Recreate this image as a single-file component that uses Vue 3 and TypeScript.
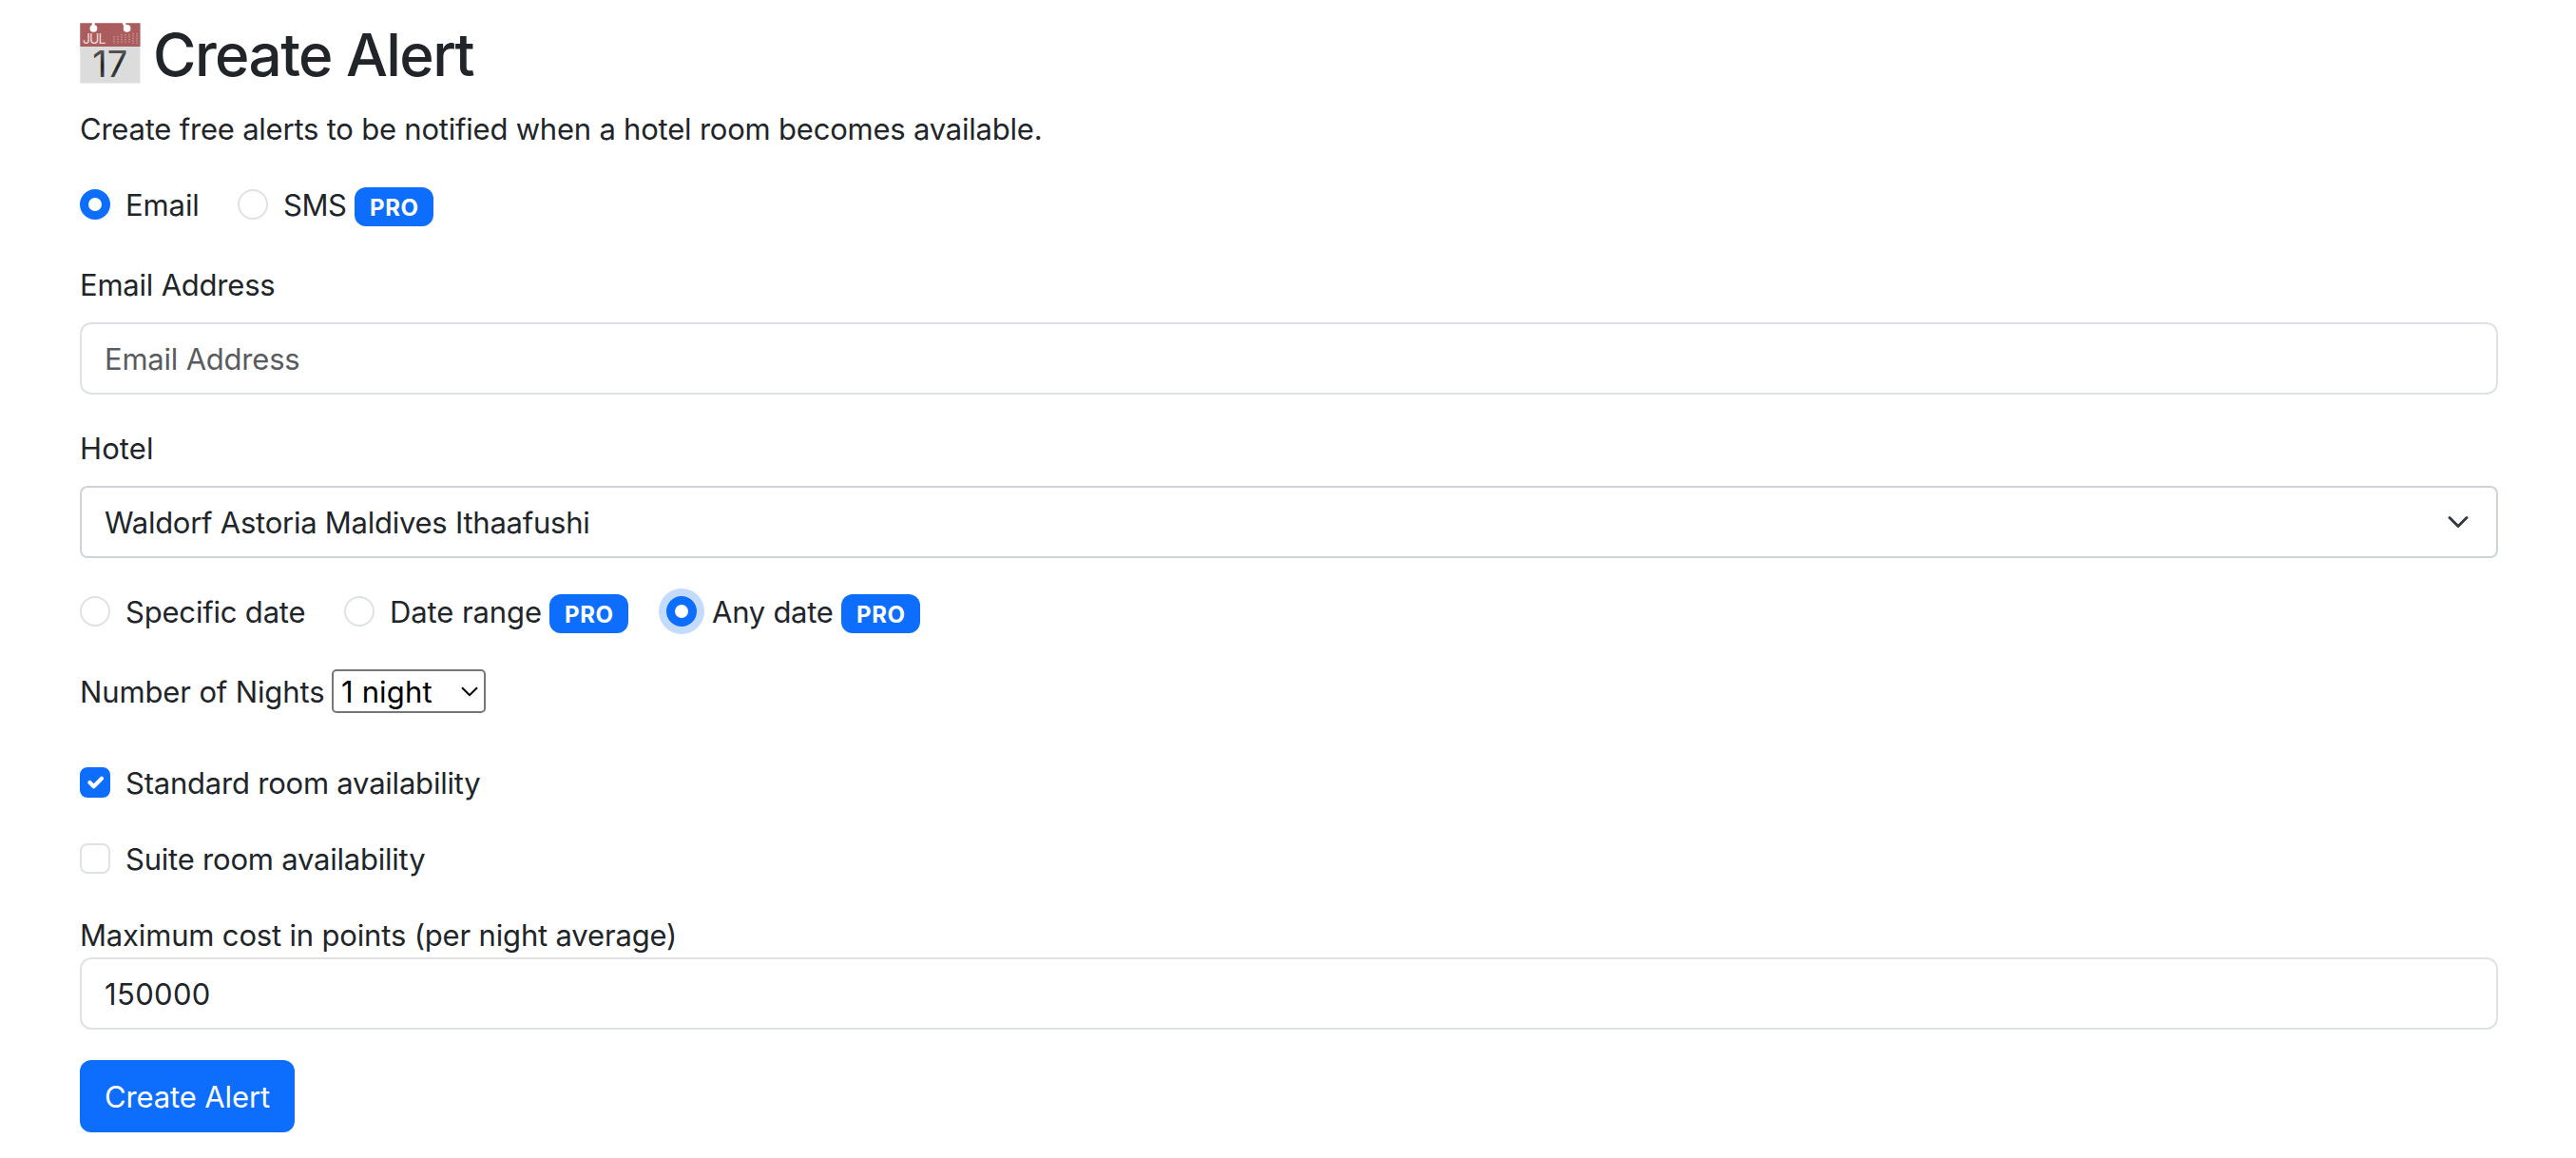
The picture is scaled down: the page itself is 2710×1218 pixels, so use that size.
<script setup lang="ts">
import { ref } from 'vue'

const channel = ref('email')
const email = ref('')
const hotel = ref('Waldorf Astoria Maldives Ithaafushi')
const dateMode = ref('any')
const nights = ref('1 night')
const standardRoom = ref(true)
const suiteRoom = ref(false)
const maxPoints = ref('150000')

// Dot columns of the miniature month grid: x position and first row
const gridColumns = [
  { x: 36, top: 14 },
  { x: 40, top: 14 },
  { x: 44, top: 12 },
  { x: 48, top: 12 },
  { x: 52, top: 12 },
  { x: 56, top: 11 },
  { x: 60, top: 11 },
]
</script>

<template>
  <main class="page">
    <h1 class="title">
      <svg class="calendar" width="64" height="64" viewBox="0 0 64 64" aria-hidden="true">
        <defs>
          <linearGradient id="digits" x1="0" y1="0" x2="0" y2="1">
            <stop offset="0.2" stop-color="#555" />
            <stop offset="0.55" stop-color="#222" />
            <stop offset="0.85" stop-color="#4a4a4a" />
          </linearGradient>
        </defs>
        <rect x="0.3" y="0.3" width="63.2" height="63.2" fill="#dcdcdc" />
        <rect x="0.3" y="0.3" width="63.2" height="24.7" fill="#ab5d5d" />
        <g fill="#fff">
          <circle cx="14.4" cy="5.8" r="3.9" />
          <rect x="12.8" y="0" width="2.8" height="4" />
          <circle cx="49.6" cy="5.8" r="3.9" />
          <path d="M44.6 0h3.4l1.6 4-3 1z" />
        </g>
        <g stroke="#d3a5a5" stroke-width="1.2" stroke-dasharray="1.3 1.2">
          <line v-for="c in gridColumns" :key="c.x" :x1="c.x" :x2="c.x" :y1="c.top" y2="22" />
        </g>
        <text x="3" y="22" font-size="14" fill="#f0dcdc" textLength="24.5">JUL</text>
        <text x="13.2" y="57.3" font-size="38" fill="url(#digits)" textLength="37">17</text>
      </svg>
      <span>Create Alert</span>
    </h1>

    <p class="lead">Create free alerts to be notified when a hotel room becomes available.</p>

    <div class="choices channel">
      <label class="choice email"><input v-model="channel" type="radio" value="email" /><span>Email</span></label>
      <label class="choice sms"><input v-model="channel" type="radio" value="sms" /><span>SMS</span></label>
      <span class="badge">PRO</span>
    </div>

    <label class="label" for="email">Email Address</label>
    <input id="email" v-model="email" class="control" type="text" placeholder="Email Address" />

    <label class="label hotel-label" for="hotel">Hotel</label>
    <div class="select-wrap">
      <select id="hotel" v-model="hotel" class="control select">
        <option>Waldorf Astoria Maldives Ithaafushi</option>
      </select>
      <svg class="chevron" width="24" height="24" viewBox="0 0 16 16" aria-hidden="true">
        <path d="m2 5 6 6 6-6" fill="none" stroke="#343a40" stroke-width="2" stroke-linecap="round" stroke-linejoin="round" />
      </svg>
    </div>

    <div class="choices dates">
      <label class="choice specific"><input v-model="dateMode" type="radio" value="specific" /><span>Specific date</span></label>
      <label class="choice range"><input v-model="dateMode" type="radio" value="range" /><span>Date range</span></label>
      <span class="badge">PRO</span>
      <label class="choice any"><input v-model="dateMode" class="focused" type="radio" value="any" /><span>Any date</span></label>
      <span class="badge">PRO</span>
    </div>

    <div class="nights">
      <label for="nights">Number of Nights</label>
      <div class="nights-wrap">
        <select id="nights" v-model="nights" class="nights-select">
          <option>1 night</option>
        </select>
        <svg class="nights-chevron" width="18" height="11" viewBox="0 0 18 11" aria-hidden="true">
          <path d="M1 1.2 9 9.2 17 1.2" fill="none" stroke="#000" stroke-width="2" />
        </svg>
      </div>
    </div>

    <label class="choice check standard"><input v-model="standardRoom" type="checkbox" /><span>Standard room availability</span></label>
    <label class="choice check suite"><input v-model="suiteRoom" type="checkbox" /><span>Suite room availability</span></label>

    <label class="cost-label" for="cost">Maximum cost in points (per night average)</label>
    <input id="cost" v-model="maxPoints" class="control cost" type="text" />

    <button class="submit" type="button">Create Alert</button>
  </main>
</template>

<style>
body {
  margin: 0;
  background: #fff;
}
</style>

<style scoped>
.page {
  box-sizing: border-box;
  height: 1218px;
  padding: 19px 82px 0 84px;
  display: flex;
  flex-direction: column;
  align-items: flex-start;
  overflow: hidden;
  color: #212529;
  font: 400 31px/48px Inter, 'Liberation Sans', sans-serif;
  letter-spacing: -0.215px;
  white-space: nowrap;
}

input,
select,
button {
  box-sizing: border-box;
  margin: 0;
  font: inherit;
  letter-spacing: inherit;
  color: inherit;
  appearance: none;
  outline: none;
}

.title {
  display: flex;
  gap: 13px;
  height: 77px;
  margin: 0;
  font-size: 62px;
  font-weight: 500;
  line-height: 77px;
  letter-spacing: -1.58px;
}

.calendar {
  margin-top: 5px;
  letter-spacing: 0;
  font-weight: 400;
  overflow: visible;
}

.lead {
  margin: 16px 0 0;
  letter-spacing: -0.215px;
}

.choices {
  display: flex;
  align-items: flex-start;
  height: 48px;
}

.channel {
  margin-top: 32px;
}

.choice {
  display: flex;
  align-items: flex-start;
  gap: 16px;
}

.choice input {
  flex: none;
  width: 32px;
  height: 32px;
  margin-top: 7px;
  border: 2px solid #dee2e6;
  background: #fff no-repeat center / contain;
}

.choice input[type='radio'] {
  border-radius: 50%;
}

.choice input[type='checkbox'] {
  border-radius: 8px;
}

.choice input:checked {
  border-color: #0d6efd;
  background-color: #0d6efd;
}

.choice input[type='radio']:checked {
  background-image: url("data:image/svg+xml,%3csvg xmlns='http://www.w3.org/2000/svg' viewBox='-4 -4 8 8'%3e%3ccircle r='2' fill='%23fff'/%3e%3c/svg%3e");
}

.choice input[type='checkbox']:checked {
  background-image: url("data:image/svg+xml,%3csvg xmlns='http://www.w3.org/2000/svg' viewBox='0 0 20 20'%3e%3cpath fill='none' stroke='%23fff' stroke-linecap='round' stroke-linejoin='round' stroke-width='3' d='m6 10 3 3 6-6'/%3e%3c/svg%3e");
}

.choice input.focused {
  box-shadow: 0 0 0 8px #c3dbff;
}

.email {
  width: 125px;
  letter-spacing: -0.1px;
}

.sms {
  width: 114px;
  margin-left: 41px;
  letter-spacing: -0.4px;
}

.specific {
  width: 238px;
  letter-spacing: -0.19px;
}

.range {
  width: 207px;
  margin-left: 40px;
  letter-spacing: -0.1px;
}

.any {
  width: 175px;
  margin-left: 40px;
  letter-spacing: -0.25px;
}

.badge {
  box-sizing: border-box;
  width: 83px;
  height: 41px;
  margin: 5px 0 0 9px;
  padding-left: 16px;
  border-radius: 12px;
  background: #0d6efd;
  color: #fff;
  font-size: 24px;
  font-weight: 700;
  line-height: 43px;
  letter-spacing: 0.6px;
}

.label {
  margin: 36px 0 15px;
}

.hotel-label {
  margin-top: 33px;
  letter-spacing: 0.1px;
}

.control {
  width: 100%;
  height: 76px;
  padding: 0 24px;
  border: 2px solid #dee2e6;
  border-radius: 12px;
  background: #fff;
}

.control::placeholder {
  color: #595c5f;
  opacity: 1;
}

.select-wrap {
  position: relative;
  width: 100%;
  height: 76px;
}

.select {
  display: block;
  padding-top: 2px;
  border-color: #ced4da;
  border-radius: 8px;
  letter-spacing: -0.25px;
}

.chevron {
  position: absolute;
  top: 26px;
  right: 30px;
}

.dates {
  margin-top: 33px;
}

.nights {
  display: flex;
  height: 48px;
  margin-top: 36px;
  letter-spacing: -0.13px;
}

.nights label {
  width: 265px;
}

.nights-wrap {
  position: relative;
  width: 162px;
  height: 46px;
}

.nights-select {
  display: block;
  width: 162px;
  height: 46px;
  padding: 1px 40px 0 8px;
  border: 2px solid #767676;
  border-radius: 5px;
  background: #fff;
  color: #000;
  line-height: 38px;
  letter-spacing: 0.15px;
}

.nights-chevron {
  position: absolute;
  top: 18px;
  right: 8px;
}

.standard {
  margin-top: 48px;
}

.suite {
  margin-top: 32px;
}

.cost-label {
  height: 47px;
  margin-top: 32px;
  letter-spacing: -0.17px;
}

.cost {
  letter-spacing: 0.35px;
}

.submit {
  width: 226px;
  height: 76px;
  margin-top: 32px;
  padding: 2px 0 0 26px;
  border: 0;
  border-radius: 12px;
  background: #0d6efd;
  color: #fff;
  text-align: left;
  letter-spacing: -0.13px;
}
</style>
